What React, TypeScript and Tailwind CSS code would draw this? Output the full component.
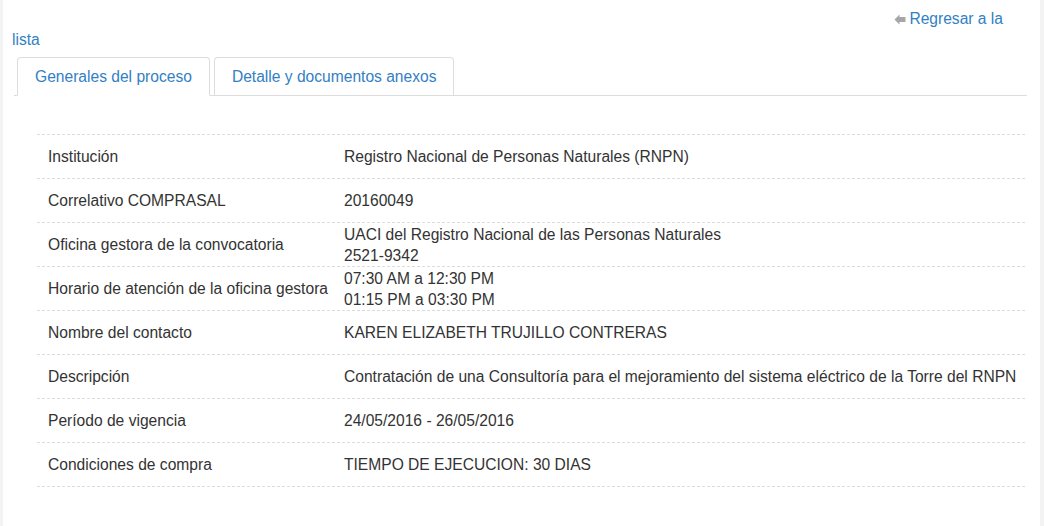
import React from "react";

const rows: { label: string; value: string[] }[] = [
  { label: "Institución", value: ["Registro Nacional de Personas Naturales (RNPN)"] },
  { label: "Correlativo COMPRASAL", value: ["20160049"] },
  {
    label: "Oficina gestora de la convocatoria",
    value: ["UACI del Registro Nacional de las Personas Naturales", "2521-9342"],
  },
  {
    label: "Horario de atención de la oficina gestora",
    value: ["07:30 AM a 12:30 PM", "01:15 PM a 03:30 PM"],
  },
  { label: "Nombre del contacto", value: ["KAREN ELIZABETH TRUJILLO CONTRERAS"] },
  {
    label: "Descripción",
    value: [
      "Contratación de una Consultoría para el mejoramiento del sistema eléctrico de la Torre del RNPN",
    ],
  },
  { label: "Período de vigencia", value: ["24/05/2016 - 26/05/2016"] },
  { label: "Condiciones de compra", value: ["TIEMPO DE EJECUCION: 30 DIAS"] },
];

function ArrowLeft() {
  return (
    <svg width="12" height="11" viewBox="0 0 12 11" className="mr-[3px] mt-[1px]">
      <path d="M0.5 5.5 L5.5 0.5 L5.5 3 L11.5 3 L11.5 8 L5.5 8 L5.5 10.5 Z" fill="#a6a6a6" />
    </svg>
  );
}

export default function App() {
  return (
    <div className="flex min-h-[526px] bg-[#f3f3f3] pl-[3px] pr-[4px] font-['Liberation_Sans',Arial,sans-serif] text-[15.6px] text-[#333]">
      <div className="flex-1 bg-white">
        {/* back link */}
        <div className="pt-[8px] leading-[21px] text-[#3280c4]">
          <div className="flex items-center justify-end pr-[37px]">
            <ArrowLeft />
            <span>Regresar a la</span>
          </div>
          <div className="pl-[9px]">lista</div>
        </div>

        {/* tabs */}
        <div className="ml-[11px] mr-[13px] mt-[7px] flex gap-[4px] border-b border-[#dddddd] pl-[3px]">
          <div className="-mb-px rounded-t-[4px] border border-b-white border-[#dddddd] bg-white px-[17px] py-[8px] leading-[21px] text-[#3280c4]">
            Generales del proceso
          </div>
          <div className="rounded-t-[4px] border border-b-0 border-[#dddddd] px-[17px] py-[8px] leading-[21px] text-[#3280c4]">
            Detalle y documentos anexos
          </div>
        </div>

        {/* details table */}
        <div className="ml-[34px] mr-[15px] mt-[38px] border-t border-dashed border-[#dcdcdc]">
          {rows.map((r) => (
            <div
              key={r.label}
              className="grid h-[44px] grid-cols-[296px_1fr] items-center border-b border-dashed border-[#dcdcdc] leading-[21px]"
            >
              <div className="whitespace-nowrap pl-[11px]">{r.label}</div>
              <div className="whitespace-nowrap pl-[11px]">
                {r.value.map((v) => (
                  <div key={v}>{v}</div>
                ))}
              </div>
            </div>
          ))}
        </div>
      </div>
    </div>
  );
}
